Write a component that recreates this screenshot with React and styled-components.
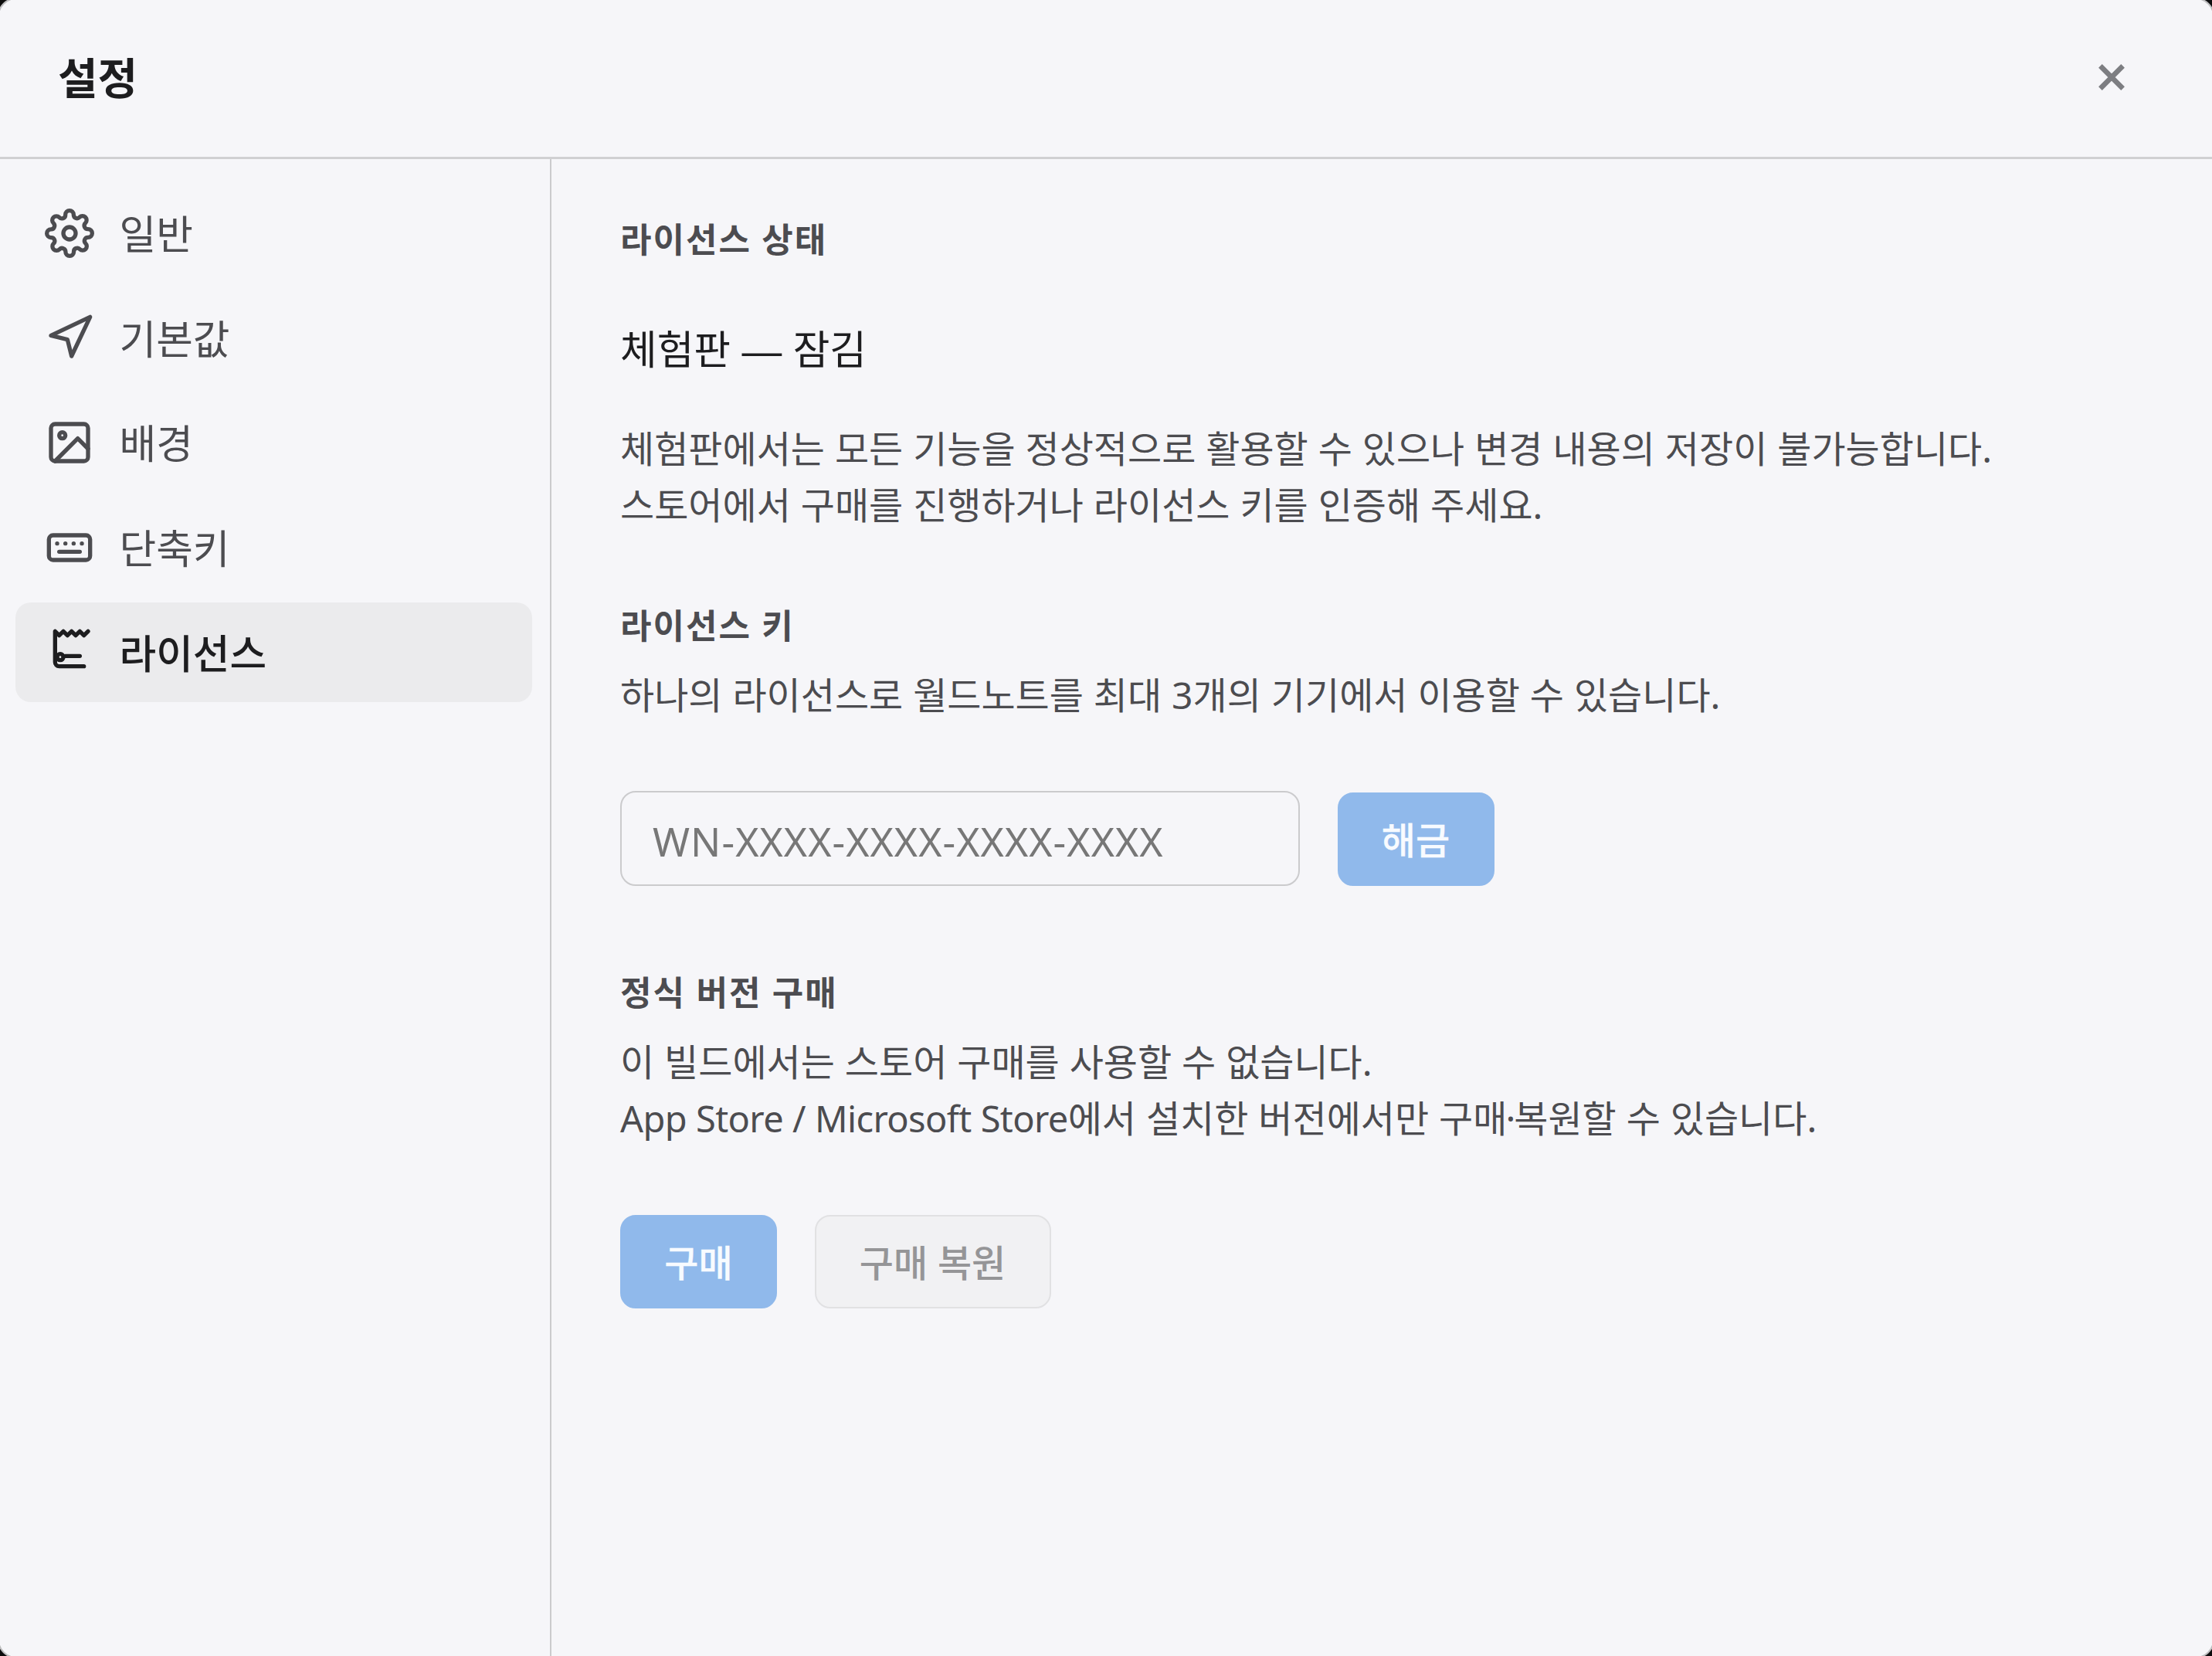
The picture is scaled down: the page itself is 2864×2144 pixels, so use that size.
import React from 'react';
import styled, { createGlobalStyle } from 'styled-components';

const Global = createGlobalStyle`
  * { box-sizing: border-box; }
  html, body { margin: 0; padding: 0; background: #0c0c0d; overflow: hidden; }
  body, button, input { font-family: "Noto Sans", "Noto Sans CJK KR", sans-serif; }
`;

const Window = styled.div`
  width: 2870px;
  height: 2150px;
  margin: -3px;
  padding: 1px;
  display: flex;
  flex-direction: column;
  background: #f6f6f9;
  border: 2px solid #bdbdbf;
  border-radius: 24px;
  overflow: hidden;
`;

const Header = styled.header`
  flex: none;
  height: 206px;
  display: flex;
  align-items: center;
  justify-content: space-between;
  padding: 0 100px 4px 75px;
  border-bottom: 3px solid #d0d0d2;
`;

const Title = styled.h1`
  margin: 0;
  font-size: 56px;
  line-height: 80px;
  font-weight: 700;
  color: #1d1d1f;
`;

const CloseButton = styled.button`
  width: 60px;
  height: 60px;
  padding: 0;
  border: 0;
  background: none;
  color: #7d7e82;
  display: grid;
  place-items: center;
`;

const Body = styled.div`
  flex: 1;
  display: flex;
  min-height: 0;
`;

const Sidebar = styled.nav`
  flex: none;
  width: 714px;
  border-right: 2px solid #cbcbcd;
  padding: 31px 23px 0 20px;
  display: flex;
  flex-direction: column;
  gap: 6.7px;
`;

const NavItem = styled.a`
  height: 129px;
  border-radius: 20px;
  padding: 0 38px;
  display: flex;
  align-items: center;
  gap: 32.5px;
  font-size: 51.8px;
  font-weight: ${(p) => (p.$active ? 500 : 400)};
  color: ${(p) => (p.$active ? '#1d1d1f' : '#4c4c50')};
  background: ${(p) => (p.$active ? '#ebebed' : 'transparent')};
`;

const NavIcon = styled.svg`
  width: 64px;
  height: 64px;
  fill: none;
  stroke: currentColor;
  stroke-width: 2;
  stroke-linecap: round;
  stroke-linejoin: round;
`;

const NavLabel = styled.span`
  font-family: "Noto Sans CJK KR", sans-serif;
  line-height: 64px;
  padding-bottom: 1px;
`;

const Content = styled.main`
  flex: 1;
  padding: 71px 89px 0;
`;

const Section = styled.section`
  margin-bottom: ${(p) => p.$gap}px;
`;

const SectionTitle = styled.h2`
  margin: 0;
  font-size: 44px;
  line-height: 66px;
  font-weight: 700;
  letter-spacing: 2px;
  color: #4c4c50;
`;

const Status = styled.p`
  margin: 76px 0 0;
  font-size: 51.8px;
  line-height: 66px;
  word-spacing: 1px;
  color: #1d1d1f;
`;

const Dash = styled.span`
  font-family: "Liberation Sans", sans-serif;
`;

const Description = styled.p`
  margin: ${(p) => p.$top}px 0 0;
  font-size: 48px;
  line-height: 73px;
  word-spacing: 0.45px;
  white-space: nowrap;
  color: #4c4c50;
`;

const Latin = styled.span`
  font-size: 47px;
  letter-spacing: -0.63px;
`;

const MiddleDot = styled.span`
  margin: 0 -2px;
`;

const Actions = styled.div`
  display: flex;
  align-items: flex-end;
  gap: 48.5px;
  margin-top: ${(p) => p.$top}px;
`;

const KeyInput = styled.input`
  width: 880px;
  height: 123px;
  padding: 6px 38px 0 40px;
  border: 2px solid #cbcbcd;
  border-radius: 20px;
  background: #f6f6f9;
  font-size: 51.7px;
  letter-spacing: 1.05px;
  color: #1d1d1f;
  outline: none;
  &::placeholder { color: #777; opacity: 1; }
`;

const Button = styled.button`
  width: ${(p) => p.$width}px;
  height: 121px;
  padding: 0 0 3px;
  border-radius: 20px;
  border: 2px solid ${(p) => (p.$primary ? '#90b9eb' : '#e1e1e3')};
  background: ${(p) => (p.$primary ? '#90b9eb' : '#f1f1f3')};
  color: ${(p) => (p.$primary ? '#f8fbff' : '#959597')};
  font-size: 48px;
  font-weight: 500;
  font-family: "Noto Sans CJK KR", sans-serif;
  word-spacing: 2px;
  -webkit-text-stroke: ${(p) => (p.$primary ? 0.3 : 0)}px currentColor;
`;

const navItems = [
  {
    label: '일반',
    icon: (
      <>
        <circle cx="12" cy="12" r="3" />
        <path d="M19.4 15a1.65 1.65 0 0 0 .33 1.82l.06.06a2 2 0 0 1 0 2.83 2 2 0 0 1-2.83 0l-.06-.06a1.65 1.65 0 0 0-1.82-.33 1.65 1.65 0 0 0-1 1.51V21a2 2 0 0 1-2 2 2 2 0 0 1-2-2v-.09A1.65 1.65 0 0 0 9 19.4a1.65 1.65 0 0 0-1.82.33l-.06.06a2 2 0 0 1-2.83 0 2 2 0 0 1 0-2.83l.06-.06a1.65 1.65 0 0 0 .33-1.82 1.65 1.65 0 0 0-1.51-1H3a2 2 0 0 1-2-2 2 2 0 0 1 2-2h.09A1.65 1.65 0 0 0 4.6 9a1.65 1.65 0 0 0-.33-1.82l-.06-.06a2 2 0 0 1 0-2.83 2 2 0 0 1 2.83 0l.06.06a1.65 1.65 0 0 0 1.82.33H9a1.65 1.65 0 0 0 1-1.51V3a2 2 0 0 1 2-2 2 2 0 0 1 2 2v.09a1.65 1.65 0 0 0 1 1.51 1.65 1.65 0 0 0 1.82-.33l.06-.06a2 2 0 0 1 2.83 0 2 2 0 0 1 0 2.83l-.06.06a1.65 1.65 0 0 0-.33 1.82V9a1.65 1.65 0 0 0 1.51 1H21a2 2 0 0 1 2 2 2 2 0 0 1-2 2h-.09a1.65 1.65 0 0 0-1.51 1z" />
      </>
    ),
  },
  { label: '기본값', icon: <path d="M3 11 22 2 13 21 11 13 3 11z" /> },
  {
    label: '배경',
    icon: (
      <>
        <rect x="3" y="3" width="18" height="18" rx="2" />
        <circle cx="8.5" cy="8.5" r="1.5" />
        <path d="M21 15 16 10 5 21" />
      </>
    ),
  },
  {
    label: '단축키',
    icon: (
      <>
        <rect x="2" y="6" width="20" height="12" rx="2" />
        <path d="M6 10h.01M10 10h.01M14 10h.01M18 10h.01M7 14h10" />
      </>
    ),
  },
  {
    label: '라이선스',
    active: true,
    icon: (
      <>
        <path d="M21 2 19 4 17 2 15 4 13 2 11 4 9 2 7 4 5 2v15a2 2 0 0 0 2 2h12" />
        <path d="M10 14h7" />
        <circle cx="7.5" cy="14.5" r="1.5" />
      </>
    ),
  },
];

export default function App() {
  return (
    <>
      <Global />
      <Window>
        <Header>
          <Title>설정</Title>
          <CloseButton aria-label="닫기">
            <svg width="40" height="40" viewBox="-20 -20 40 40" stroke="currentColor" strokeWidth="6.6">
              <path d="M-14.6-14.6 14.6 14.6M14.6-14.6-14.6 14.6" />
            </svg>
          </CloseButton>
        </Header>
        <Body>
          <Sidebar>
            {navItems.map((item) => (
              <NavItem key={item.label} $active={item.active}>
                <NavIcon viewBox="0 0 24 24" overflow="visible">{item.icon}</NavIcon>
                <NavLabel>{item.label}</NavLabel>
              </NavItem>
            ))}
          </Sidebar>
          <Content>
            <Section $gap={87}>
              <SectionTitle>라이선스 상태</SectionTitle>
              <Status>체험판 <Dash>—</Dash> 잠김</Status>
              <Description $top={57}>
                체험판에서는 모든 기능을 정상적으로 활용할 수 있으나 변경 내용의 저장이 불가능합니다.
                <br />
                스토어에서 구매를 진행하거나 라이선스 키를 인증해 주세요.
              </Description>
            </Section>
            <Section $gap={105}>
              <SectionTitle>라이선스 키</SectionTitle>
              <Description $top={20}>하나의 라이선스로 월드노트를 최대 3개의 기기에서 이용할 수 있습니다.</Description>
              <Actions $top={88}>
                <KeyInput placeholder="WN-XXXX-XXXX-XXXX-XXXX" />
                <Button $primary $width={203}>해금</Button>
              </Actions>
            </Section>
            <Section $gap={0}>
              <SectionTitle>정식 버전 구매</SectionTitle>
              <Description $top={20}>
                이 빌드에서는 스토어 구매를 사용할 수 없습니다.
                <br />
                <Latin>App Store / Microsoft Store</Latin>에서 설치한 버전에서만 구매<MiddleDot>·</MiddleDot>복원할 수 있습니다.
              </Description>
              <Actions $top={88}>
                <Button $primary $width={203}>구매</Button>
                <Button $width={306}>구매 복원</Button>
              </Actions>
            </Section>
          </Content>
        </Body>
      </Window>
    </>
  );
}
